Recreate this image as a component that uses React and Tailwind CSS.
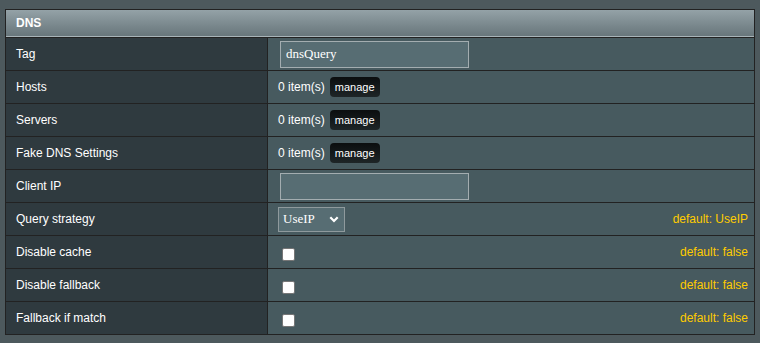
import React from "react";

const rows = [
  { label: "Tag", type: "input", value: "dnsQuery" },
  { label: "Hosts", type: "manage" },
  { label: "Servers", type: "manage" },
  { label: "Fake DNS Settings", type: "manage" },
  { label: "Client IP", type: "input", value: "" },
  { label: "Query strategy", type: "select", def: "default: UseIP" },
  { label: "Disable cache", type: "check", def: "default: false" },
  { label: "Disable fallback", type: "check", def: "default: false" },
  { label: "Fallback if match", type: "check", def: "default: false" },
];

function Cell({ r }) {
  if (r.type === "input") {
    return (
      <div className="pl-[12px] flex items-center">
        <div className="w-[189px] h-[27px] border border-[#a3adb0] bg-[#576d73] flex items-center pl-[5px] text-[13px] text-white [font-family:'Liberation_Serif',serif]">
          {r.value}
        </div>
      </div>
    );
  }
  if (r.type === "manage") {
    return (
      <div className="pl-[10px] flex items-center">
        <span className="text-[12px] text-white">0 item(s)</span>
        <span className="ml-[5px] w-[50px] h-[20px] rounded-[4px] bg-gradient-to-b from-[#0b0e0f] to-[#1e2527] text-white text-[11px] flex items-center justify-center">
          manage
        </span>
      </div>
    );
  }
  if (r.type === "select") {
    return (
      <div className="pl-[10px] flex items-center">
        <div className="w-[67px] h-[25px] border border-[#8f9a9d] bg-[#576d73] flex items-center pl-[4px] pr-[5px] justify-between text-[13px] text-white [font-family:'Liberation_Serif',serif]">
          <span>UseIP</span>
          <svg width="10" height="7" viewBox="0 0 10 7" className="mt-[1px]">
            <path d="M1.3 1.3 L5 5 L8.7 1.3" stroke="white" strokeWidth="2.2" fill="none" />
          </svg>
        </div>
      </div>
    );
  }
  return (
    <div className="pl-[14px] flex items-center pt-[4px]">
      <div className="w-[13px] h-[13px] bg-white border border-[#767676] rounded-[2px]" />
    </div>
  );
}

export default function App() {
  return (
    <div className="w-[760px] h-[343px] bg-[#4d595d] pt-[9px] pl-[5px] [font-family:'Liberation_Sans',Arial,sans-serif]">
      <div className="w-[750px] border border-[#222]">
        <div className="h-[27px] bg-gradient-to-b from-[#94a2a7] to-[#68767b] border-b border-[#a8b4b8] flex items-center pl-[10px] text-[12px] font-bold text-white">
          DNS
        </div>
        {rows.map((r) => (
          <div key={r.label} className="h-[33px] border-t border-[#222] flex">
            <div className="w-[262px] shrink-0 bg-[#2f3a3f] border-r border-[#222] flex items-center pl-[10px] text-[12px] text-white">
              {r.label}
            </div>
            <div className="flex-1 bg-[#475a5f] flex items-stretch justify-between">
              <Cell r={r} />
              {r.def && (
                <div className="flex items-center pr-[6px] text-[12px] text-[#ffcc00]">{r.def}</div>
              )}
            </div>
          </div>
        ))}
      </div>
    </div>
  );
}
